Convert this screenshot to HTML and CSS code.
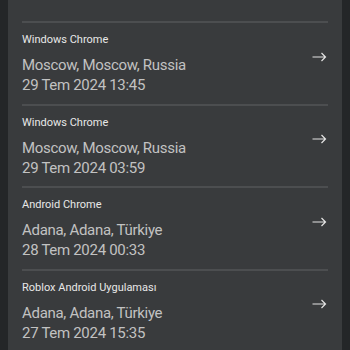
FILE: index.html
```html
<!DOCTYPE html>
<html lang="tr">
<head>
    <meta charset="UTF-8">
    <meta name="viewport" content="width=device-width, initial-scale=1.0">
    <title>Oturumlar</title>
    <link rel="stylesheet" href="styles.css">
</head>
<body>
    <div class="panel">
        <!-- oturum listesi -->
        <div class="session">
            <div class="info">
                <div class="device">Windows Chrome</div>
                <div class="place">Moscow, Moscow, Russia</div>
                <div class="place">29 Tem 2024 13:45</div>
            </div>
            <svg class="arrow" width="15" height="10" viewBox="0 0 15 10"><path d="M0.5 5H13.5M9.5 1L13.5 5L9.5 9" fill="none" stroke="#e4e4e4" stroke-width="1.2"/></svg>
        </div>
        <div class="session">
            <div class="info">
                <div class="device">Windows Chrome</div>
                <div class="place">Moscow, Moscow, Russia</div>
                <div class="place">29 Tem 2024 03:59</div>
            </div>
            <svg class="arrow" width="15" height="10" viewBox="0 0 15 10"><path d="M0.5 5H13.5M9.5 1L13.5 5L9.5 9" fill="none" stroke="#e4e4e4" stroke-width="1.2"/></svg>
        </div>
        <div class="session">
            <div class="info">
                <div class="device">Android Chrome</div>
                <div class="place">Adana, Adana, Türkiye</div>
                <div class="place">28 Tem 2024 00:33</div>
            </div>
            <svg class="arrow" width="15" height="10" viewBox="0 0 15 10"><path d="M0.5 5H13.5M9.5 1L13.5 5L9.5 9" fill="none" stroke="#e4e4e4" stroke-width="1.2"/></svg>
        </div>
        <div class="session">
            <div class="info">
                <div class="device">Roblox Android Uygulaması</div>
                <div class="place">Adana, Adana, Türkiye</div>
                <div class="place">27 Tem 2024 15:35</div>
            </div>
            <svg class="arrow" width="15" height="10" viewBox="0 0 15 10"><path d="M0.5 5H13.5M9.5 1L13.5 5L9.5 9" fill="none" stroke="#e4e4e4" stroke-width="1.2"/></svg>
        </div>
    </div>
</body>
</html>
```

FILE: styles.css
```css
body {
    font-family: Roboto, "Noto Sans", sans-serif;
    background-color: #242628;
    margin: 0;
    padding: 0;
}
.panel {
    background-color: #393b3d;
    margin: 0 8px;
    padding: 21px 14px 0;
    height: 100vh;
    box-sizing: border-box;
    overflow: hidden;
}
.session {
    display: flex;
    align-items: center;
    border-top: 2px solid #4c4e50;
    padding: 9px 0 8.5px;
}
.info {
    flex: 1;
}
.device {
    font-size: 11px;
    line-height: 16px;
    color: #e8e8e8;
    margin-bottom: 7px;
}
.place {
    font-size: 15px;
    line-height: 20px;
    letter-spacing: -0.3px;
    color: #c2c2c2;
}
.arrow {
    margin-right: 1px;
    margin-bottom: 14px;
}
```
